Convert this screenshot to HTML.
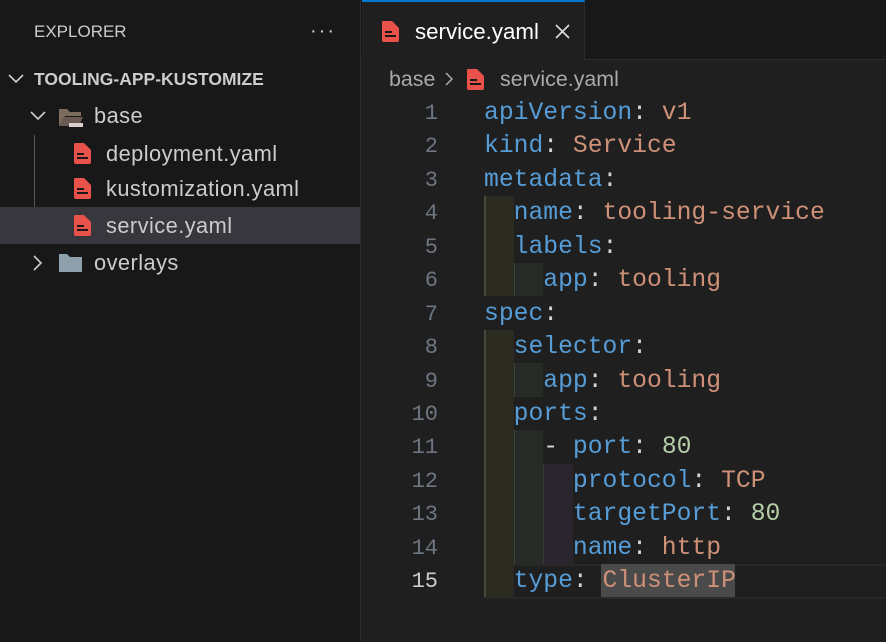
<!DOCTYPE html>
<html><head><style>
body{margin:0;width:886px;height:642px;overflow:hidden;background:#1f1f1f;font-family:"Liberation Sans",sans-serif;position:relative}
.side{position:absolute;left:0;top:0;width:360px;height:642px;background:#181818;border-right:1px solid #2b2b2b}
.t{position:absolute;white-space:nowrap;color:#cccccc}
.row{position:absolute;left:0;width:360px;height:37px}
.tabbar{position:absolute;left:361px;top:0;width:525px;height:59px;background:#181818;border-bottom:1px solid #2b2b2b}
.tab{position:absolute;left:362px;top:0;width:223px;height:60px;background:#1f1f1f;border-top:2px solid #0078d4;box-sizing:border-box;border-right:1px solid #2b2b2b}
.code{position:absolute;font-family:"Liberation Mono",monospace;font-size:24.7px;white-space:pre;line-height:33.43px}
.k{color:#569cd6}.s{color:#ce9178}.n{color:#b5cea8}.p{color:#d4d4d4}
.ln{position:absolute;left:380px;width:58px;text-align:right;font-family:"Liberation Mono",monospace;font-size:22px;color:#6e7681;line-height:33.43px}
.g{position:absolute}
.f{font-size:21.8px;letter-spacing:0.45px}
</style></head><body>
<div class="side">
<div class="t" style="left:34px;top:22px;font-size:17px">EXPLORER</div>
<div class="t" style="left:310px;top:20px;font-size:20px;letter-spacing:2px">···</div>
<svg class="g" style="left:8px;top:73px" width="16" height="12"><path d="M1 2l7 7 7-7" stroke="#ccc" stroke-width="1.6" fill="none"/></svg>
<div class="t" style="left:34px;top:69px;font-size:17.5px;font-weight:bold">TOOLING-APP-KUSTOMIZE</div>
<svg class="g" style="left:30px;top:110px" width="16" height="12"><path d="M1 2l7 7 7-7" stroke="#ccc" stroke-width="1.6" fill="none"/></svg>
<svg class="g" style="left:58px;top:107px" width="26" height="21"><path d="M1 2h8l3 3h11v4H7L3 19H1z" fill="#7d6b60"/><path d="M5 10h20l-4 9H1z" fill="#6a5a52"/><rect x="11" y="16" width="14" height="4" fill="#d8d0cc"/></svg>
<div class="t f" style="left:94px;top:103px">base</div>
<div style="position:absolute;left:34px;top:135px;width:1px;height:108px;background:#585858"></div>
<div class="row" style="top:207px;background:#37373d"></div>
<div class="t f" style="left:106px;top:141px">deployment.yaml</div>
<div class="t f" style="left:106px;top:176px">kustomization.yaml</div>
<div class="t f" style="left:106px;top:213px">service.yaml</div>
<svg class="g" style="left:31px;top:255px" width="14" height="16"><path d="M3 1l7 7-7 7" stroke="#ccc" stroke-width="1.6" fill="none"/></svg>
<svg class="g" style="left:58px;top:253px" width="26" height="20"><path d="M1 1h8l3 3h12v15H1z" fill="#8fa0ad"/></svg>
<div class="t f" style="left:94px;top:250px">overlays</div>
</div>
<svg width="0" height="0" style="position:absolute"><defs><g id="yi"><path d="M1 0h9l7 7v12a2 2 0 0 1-2 2H2a2 2 0 0 1-2-2V1a1 1 0 0 1 1-1z" fill="#e8524a"/><rect x="3" y="10" width="7" height="2" fill="#181818"/><rect x="3" y="14" width="11" height="2" fill="#181818"/></g></defs></svg>
<svg class="g" style="left:74px;top:143px" width="18" height="22"><use href="#yi"/></svg>
<svg class="g" style="left:74px;top:178px" width="18" height="22"><use href="#yi"/></svg>
<svg class="g" style="left:74px;top:215px" width="18" height="22"><use href="#yi"/></svg>
<div class="tabbar"></div>
<div class="tab"></div>
<svg class="g" style="left:382px;top:21px" width="18" height="22"><use href="#yi"/></svg>
<div class="t" style="left:415px;top:19px;font-size:22.3px;color:#fff">service.yaml</div>
<svg class="g" style="left:555px;top:24px" width="15" height="15"><path d="M1 1l13 13M14 1L1 14" stroke="#ddd" stroke-width="1.6"/></svg>
<div class="t" style="left:389px;top:67px;font-size:21.4px;color:#a9a9a9">base</div>
<svg class="g" style="left:444px;top:71px" width="10" height="16"><path d="M2 2l6 6-6 6" stroke="#a9a9a9" stroke-width="1.5" fill="none"/></svg>
<svg class="g" style="left:467px;top:69px" width="18" height="22"><use href="#yi"/></svg>
<div class="t" style="left:500px;top:67px;font-size:21.4px;color:#a9a9a9">service.yaml</div>
<div style="position:absolute;left:484px;top:564px;width:402px;height:31px;border-top:2px solid #282828;border-bottom:2px solid #282828"></div>
<div style="position:absolute;left:484px;top:196px;width:30px;height:100px;background:#2c2b22;border-left:2px solid #4a4a3a;box-sizing:border-box"></div>
<div style="position:absolute;left:514px;top:263px;width:29px;height:33px;background:#262c25;border-left:1px solid #3d453c;box-sizing:border-box"></div>
<div style="position:absolute;left:484px;top:330px;width:30px;height:267px;background:#2c2b22;border-left:2px solid #4a4a3a;box-sizing:border-box"></div>
<div style="position:absolute;left:514px;top:363px;width:29px;height:34px;background:#262c25;border-left:1px solid #3d453c;box-sizing:border-box"></div>
<div style="position:absolute;left:514px;top:430px;width:29px;height:134px;background:#262c25;border-left:1px solid #3d453c;box-sizing:border-box"></div>
<div style="position:absolute;left:543px;top:464px;width:30px;height:100px;background:#2a252d;border-left:1px solid #3d3540;box-sizing:border-box"></div>
<div style="position:absolute;left:601px;top:564px;width:134px;height:33px;background:#4a4a4a"></div>
<div class="ln" style="top:97px">1<br>2<br>3<br>4<br>5<br>6<br>7<br>8<br>9<br>10<br>11<br>12<br>13<br>14<br><span style="color:#ccc">15</span></div>
<div class="code" style="left:484px;top:97px"><span class="k">apiVersion</span><span class="p">: </span><span class="s">v1</span>
<span class="k">kind</span><span class="p">: </span><span class="s">Service</span>
<span class="k">metadata</span><span class="p">:</span>
  <span class="k">name</span><span class="p">: </span><span class="s">tooling-service</span>
  <span class="k">labels</span><span class="p">:</span>
    <span class="k">app</span><span class="p">: </span><span class="s">tooling</span>
<span class="k">spec</span><span class="p">:</span>
  <span class="k">selector</span><span class="p">:</span>
    <span class="k">app</span><span class="p">: </span><span class="s">tooling</span>
  <span class="k">ports</span><span class="p">:</span>
    <span class="p">- </span><span class="k">port</span><span class="p">: </span><span class="n">80</span>
      <span class="k">protocol</span><span class="p">: </span><span class="s">TCP</span>
      <span class="k">targetPort</span><span class="p">: </span><span class="n">80</span>
      <span class="k">name</span><span class="p">: </span><span class="s">http</span>
  <span class="k">type</span><span class="p">: </span><span class="s">ClusterIP</span></div>
</body></html>
